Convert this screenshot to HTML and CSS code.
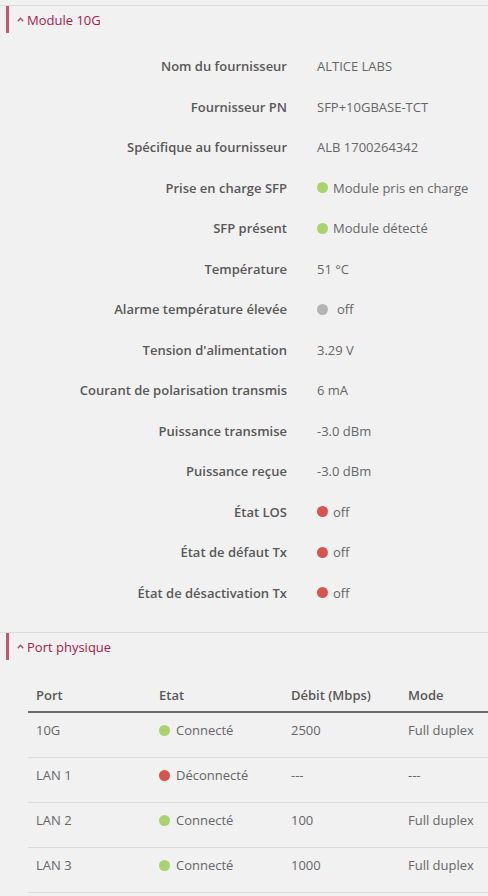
FILE: index.html
```html
<!DOCTYPE html>
<html lang="fr">
<head>
<meta charset="utf-8">
<title>Module 10G</title>
<link rel="stylesheet" href="styles.css">
</head>
<body>
<section class="panel panel-first">
  <div class="panel-head">
    <svg class="chev" width="7" height="5" viewBox="0 0 7 5"><path d="M0.8 4.2 L3.5 1.3 L6.2 4.2" fill="none" stroke="currentColor" stroke-width="1.3"/></svg>
    <span>Module 10G</span>
  </div>
  <div class="kv">
    <div class="k">Nom du fournisseur</div><div class="v">ALTICE LABS</div>
    <div class="k">Fournisseur PN</div><div class="v">SFP+10GBASE-TCT</div>
    <div class="k">Spécifique au fournisseur</div><div class="v">ALB 1700264342</div>
    <div class="k">Prise en charge SFP</div><div class="v"><span class="status"><span class="dot green"></span>Module pris en charge</span></div>
    <div class="k">SFP présent</div><div class="v"><span class="status"><span class="dot green"></span>Module détecté</span></div>
    <div class="k">Température</div><div class="v">51 °C</div>
    <div class="k">Alarme température élevée</div><div class="v"><span class="status wide"><span class="dot gray"></span>off</span></div>
    <div class="k">Tension d'alimentation</div><div class="v">3.29 V</div>
    <div class="k">Courant de polarisation transmis</div><div class="v">6 mA</div>
    <div class="k">Puissance transmise</div><div class="v">-3.0 dBm</div>
    <div class="k">Puissance reçue</div><div class="v">-3.0 dBm</div>
    <div class="k">État LOS</div><div class="v"><span class="status"><span class="dot red"></span>off</span></div>
    <div class="k">État de défaut Tx</div><div class="v"><span class="status"><span class="dot red"></span>off</span></div>
    <div class="k">État de désactivation Tx</div><div class="v"><span class="status"><span class="dot red"></span>off</span></div>
  </div>
</section>
<section class="panel panel-second">
  <div class="panel-head">
    <svg class="chev" width="7" height="5" viewBox="0 0 7 5"><path d="M0.8 4.2 L3.5 1.3 L6.2 4.2" fill="none" stroke="currentColor" stroke-width="1.3"/></svg>
    <span>Port physique</span>
  </div>
  <div class="table-wrap">
    <table class="ports">
      <colgroup>
        <col class="c1"><col class="c2"><col class="c3"><col class="c4">
      </colgroup>
      <thead>
        <tr><th>Port</th><th>Etat</th><th>Débit (Mbps)</th><th>Mode</th></tr>
      </thead>
      <tbody>
        <tr><td>10G</td><td><span class="status tbl"><span class="dot green"></span>Connecté</span></td><td>2500</td><td>Full duplex</td></tr>
        <tr><td>LAN 1</td><td><span class="status tbl"><span class="dot red"></span>Déconnecté</span></td><td>---</td><td>---</td></tr>
        <tr><td>LAN 2</td><td><span class="status tbl"><span class="dot green"></span>Connecté</span></td><td>100</td><td>Full duplex</td></tr>
        <tr><td>LAN 3</td><td><span class="status tbl"><span class="dot green"></span>Connecté</span></td><td>1000</td><td>Full duplex</td></tr>
      </tbody>
    </table>
  </div>
</section>
</body>
</html>
```
FILE: styles.css
```css
html, body {
  margin: 0;
  padding: 0;
}
body {
  background: #f1f1f1;
  font-family: "Open Sans", "Noto Sans", sans-serif;
  font-size: 13px;
  line-height: 20px;
  color: #666;
  overflow: hidden;
}
.panel {
  border-top: 1px solid #dcdcdc;
}
.panel-first {
  margin-top: 5px;
}
.panel-second {
  margin-top: 19px;
}
.panel-head {
  margin-left: 6px;
  border-left: 3px solid #c9566b;
  height: 27px;
  display: flex;
  align-items: center;
  padding-left: 8px;
  gap: 3px;
  color: #a8204c;
}
.chev {
  display: block;
  color: #b0445f;
}
.kv {
  display: grid;
  grid-template-columns: 287px auto;
  column-gap: 30px;
  grid-auto-rows: 40.5px;
  align-items: center;
  padding-top: 13px;
}
.k {
  text-align: right;
  font-weight: 600;
  color: #585858;
  white-space: nowrap;
}
.v {
  white-space: nowrap;
}
.status {
  display: inline-flex;
  align-items: center;
  gap: 5px;
}
.status.wide {
  gap: 9px;
}
.status.tbl {
  gap: 6px;
}
.dot {
  width: 11px;
  height: 11px;
  border-radius: 50%;
  display: inline-block;
  flex: none;
}
.dot.green { background: #a9d36f; }
.dot.red { background: #d9534f; }
.dot.gray { background: #b4b4b4; }

.table-wrap {
  margin-top: 18px;
  padding-left: 28px;
}
.ports {
  width: 100%;
  border-collapse: separate;
  border-spacing: 0;
  table-layout: fixed;
}
.c1 { width: 123px; }
.c2 { width: 132px; }
.c3 { width: 117px; }
.ports th {
  text-align: left;
  font-weight: 600;
  color: #585858;
  padding: 7px 8px 6px;
  border-bottom: 2px solid #6a6a6a;
  white-space: nowrap;
}
.ports td {
  padding: 7px 8px 16.6px;
  border-bottom: 1px solid #dcdcdc;
  white-space: nowrap;
  vertical-align: top;
}
```
